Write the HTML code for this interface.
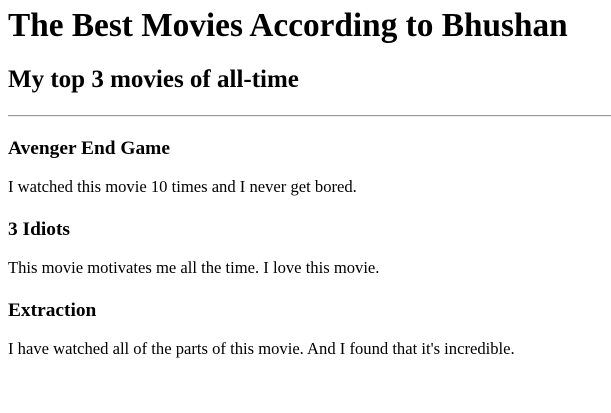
<!DOCTYPE html>
<html>
<head>
<meta charset="utf-8">
<style>
body { margin: 8px; font-family: "Liberation Serif", serif; color: #000; background: #fff; }
h1 { font-size: 33.3px; line-height: 36px; margin: 0 0 22px 0; }
h2 { font-size: 25px; line-height: 28px; margin: 0; }
h3 { font-size: 19.4px; line-height: 22px; margin: 23.5px 0 16.5px; }
h3.first { margin-top: 21px; }
p { font-size: 16.6px; line-height: 19px; margin: 0; }
hr { margin: 21px -8px 0 0; border: none; border-top: 1px solid #9a9a9a; border-bottom: 1px solid #eee; }
</style>
</head>
<body>
<h1>The Best Movies According to Bhushan</h1>
<h2>My top 3 movies of all-time</h2>
<hr>
<h3 class="first">Avenger End Game</h3>
<p>I watched this movie 10 times and I never get bored.</p>
<h3>3 Idiots</h3>
<p>This movie motivates me all the time. I love this movie.</p>
<h3>Extraction</h3>
<p>I have watched all of the parts of this movie. And I found that it's incredible.</p>
</body>
</html>
